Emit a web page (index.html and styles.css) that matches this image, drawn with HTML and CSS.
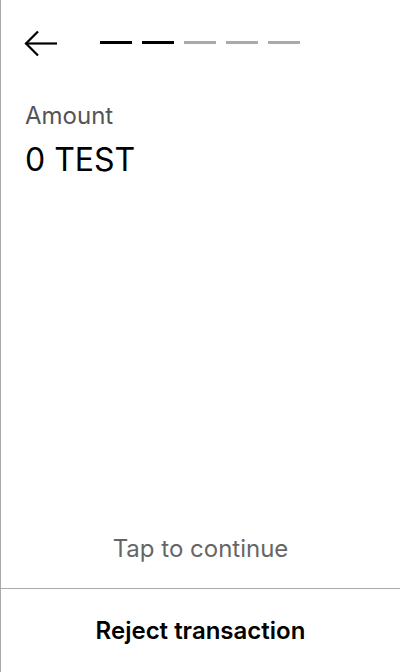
FILE: index.html
```html
<!DOCTYPE html>
<html>
<head>
<meta charset="utf-8">
<link rel="stylesheet" href="styles.css">
</head>
<body>
<div class="screen">
  <header class="header">
    <button class="back" aria-label="Back">
      <svg width="34" height="28" viewBox="0 0 34 28" fill="none" stroke="#000" stroke-width="2.2">
        <path d="M1.5 13.5 H33"/>
        <path d="M14 1.5 L2 13.5 L14 25.5"/>
      </svg>
    </button>
    <div class="steps">
      <span class="step done"></span>
      <span class="step done"></span>
      <span class="step"></span>
      <span class="step"></span>
      <span class="step"></span>
    </div>
  </header>
  <main class="content">
    <div class="label">Amount</div>
    <div class="value">0 TEST</div>
  </main>
  <div class="tap">Tap to continue</div>
  <footer class="footer">
    <div class="reject">Reject transaction</div>
  </footer>
</div>
</body>
</html>
```
FILE: styles.css
```css
* { box-sizing: border-box; }
html, body { margin: 0; padding: 0; height: 100%; }
body {
  font-family: Inter, "Noto Sans", sans-serif;
  background: #fff;
  color: #000;
}
.screen {
  height: 672px;
  border-left: 1px solid #aaa;
  display: flex;
  flex-direction: column;
}
.header {
  display: flex;
  align-items: center;
  padding: 29px 0 0 23px;
  height: 58px;
}
.back {
  border: 0;
  background: none;
  padding: 0;
  width: 34px;
  height: 28px;
  display: block;
}
.back svg { display: block; }
.steps {
  display: flex;
  gap: 10px;
  margin-left: 42px;
  margin-top: -3px;
}
.step {
  width: 32px;
  height: 3px;
  background: #aaa;
}
.step.done { background: #000; }
.content {
  flex: 1;
  padding: 43px 24px 0 24px;
}
.label {
  font-size: 24px;
  color: #555;
  line-height: 29px;
}
.value {
  font-size: 32px;
  line-height: 39px;
  margin-top: 10px;
}
.tap {
  text-align: center;
  font-size: 24px;
  color: #666;
  line-height: 29px;
  padding-bottom: 25px;
}
.footer {
  border-top: 1px solid #aaa;
  height: 84px;
  display: flex;
  align-items: center;
  justify-content: center;
}
.reject {
  font-size: 24px;
  font-weight: 600;
  line-height: 29px;
}
```
